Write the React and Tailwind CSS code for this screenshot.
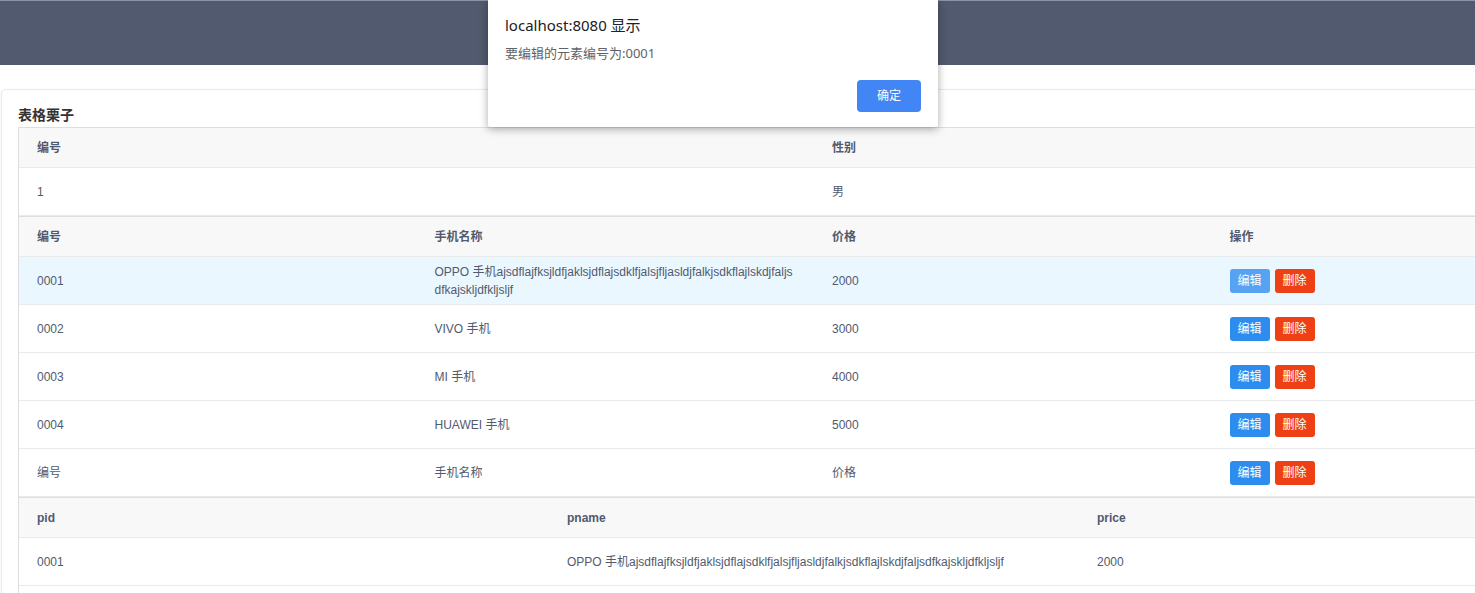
import React from "react";

const FONT = { fontFamily: '"Liberation Sans", Arial, "Noto Sans CJK SC", sans-serif' };

const longName =
  "OPPO 手机ajsdflajfksjldfjaklsjdflajsdklfjalsjfljasldjfalkjsdkflajlskdjfaljsdfkajskljdfkljsljf";

function HeaderRow({ cols, grid }) {
  return (
    <div className={`grid ${grid} h-10 bg-[#f8f8f9] border-b border-[#e8eaec]`}>
      {cols.map((c, i) => (
        <div key={i} className="flex items-center px-[18px] pt-px text-[12px] font-bold text-[#515a6e]">
          {c}
        </div>
      ))}
    </div>
  );
}

function Btns({ active }) {
  return (
    <div className="flex gap-[5px]">
      <span
        className={`h-6 w-10 flex items-center justify-center rounded-[3px] text-white text-[12px] ${
          active ? "bg-[#57a3f3]" : "bg-[#2d8cf0]"
        }`}
      >
        编辑
      </span>
      <span className="h-6 w-10 flex items-center justify-center rounded-[3px] text-white text-[12px] bg-[#ed4014]">
        删除
      </span>
    </div>
  );
}

function Row({ cells, grid, hl }) {
  return (
    <div className={`grid ${grid} h-12 border-b border-[#e8eaec] ${hl ? "bg-[#ebf7ff]" : "bg-white"}`}>
      {cells.map((c, i) => (
        <div
          key={i}
          className="flex items-center px-[18px] text-[12px] leading-[18px] text-[#515a6e] break-all"
        >
          {c}
        </div>
      ))}
    </div>
  );
}

function Table({ children }) {
  return (
    <div className="w-[1591px] border-l border-[#dcdee2] border-b border-b-[#dcdee2]">
      {children}
    </div>
  );
}

export default function App() {
  const g2 = "grid-cols-2";
  const g4 = "grid-cols-4";
  const g3 = "grid-cols-3";
  const phones = [
    ["0001", longName, "2000"],
    ["0002", "VIVO 手机", "3000"],
    ["0003", "MI 手机", "4000"],
    ["0004", "HUAWEI 手机", "5000"],
    ["编号", "手机名称", "价格"],
  ];
  return (
    <div className="relative w-[1640px] min-h-[593px] bg-white" style={FONT}>
      <div className="h-[65px] bg-[#515a6e] border-t border-[#8c93a3]" />
      <div className="pt-6 pl-px">
        <div className="w-[1624px] border border-[#e8eaec] rounded-[4px] shadow-[0_1px_3px_rgba(0,0,0,0.06)] p-4 pt-[14px]">
          <div className="h-[23px] text-[14px] font-bold text-[#333] leading-[23px]">表格栗子</div>
          <div className="border-t border-[#dcdee2] w-[1591px]">
            <Table>
              <HeaderRow grid={g2} cols={["编号", "性别"]} />
              <Row grid={g2} cells={["1", "男"]} />
            </Table>
            <Table>
              <HeaderRow grid={g4} cols={["编号", "手机名称", "价格", "操作"]} />
              {phones.map((p, i) => (
                <Row key={i} grid={g4} hl={i === 0} cells={[p[0], p[1], p[2], <Btns active={i === 0} />]} />
              ))}
            </Table>
            <Table>
              <HeaderRow grid={g3} cols={["pid", "pname", "price"]} />
              <Row grid={g3} cells={["0001", longName, "2000"]} />
              <Row grid={g3} cells={["0002", "VIVO 手机", "3000"]} />
            </Table>
          </div>
        </div>
      </div>

      <div
        className="absolute left-[488px] top-0 w-[450px] h-[127px] bg-white rounded-b-[2px] shadow-[0_2px_8px_rgba(0,0,0,0.35)] px-[17px] pt-[14px]"
        style={{ fontFamily: '"Noto Sans", "Noto Sans CJK SC", sans-serif' }}
      >
        <div className="text-[15px] text-[#202124] leading-[22px]">localhost:8080 显示</div>
        <div className="mt-[8px] text-[13px] text-[#5f6368] leading-[18px]">要编辑的元素编号为:0001</div>
        <div className="flex justify-end mt-[18px]">
          <span className="w-16 h-8 flex items-center justify-center rounded-[4px] bg-[#4285f4] text-white text-[12px]">
            确定
          </span>
        </div>
      </div>
    </div>
  );
}
